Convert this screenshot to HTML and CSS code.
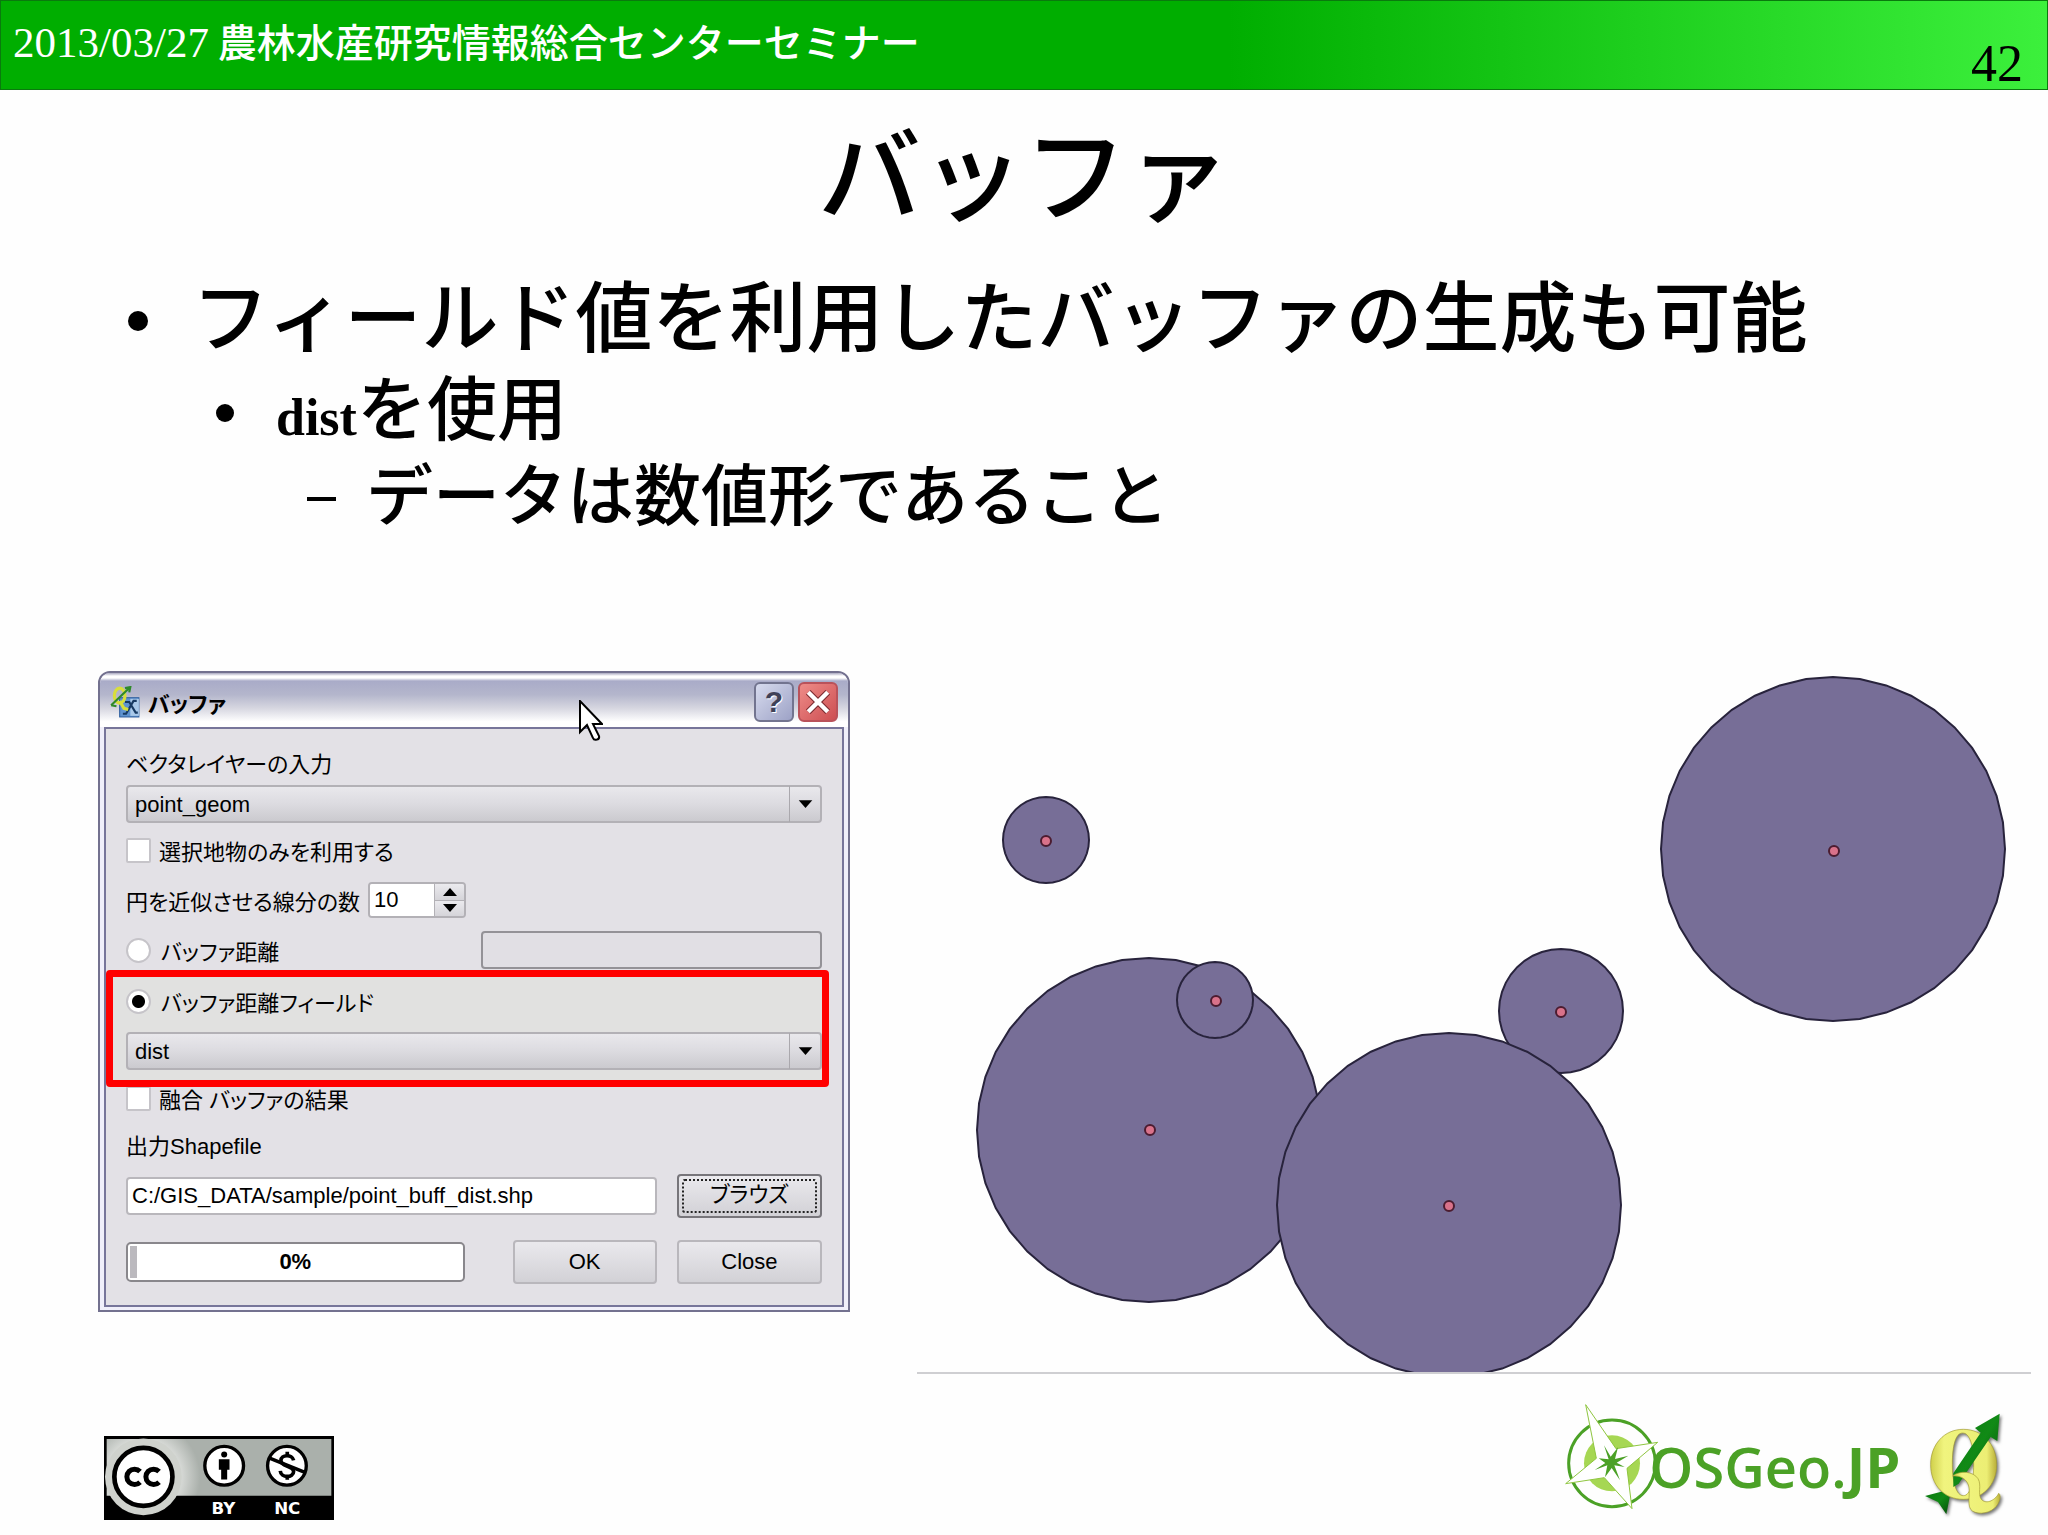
FILE: index.html
```html
<!DOCTYPE html>
<html lang="ja">
<head>
    <meta charset="UTF-8">
    <meta name="viewport" content="width=device-width, initial-scale=1.0">
    <title>バッファ</title>
    <link rel="stylesheet" href="styles.css">
</head>
<body>
    <header class="topbar">
        <p class="event"><span class="date">2013/03/27</span> 農林水産研究情報総合センターセミナー</p>
        <span class="page-number">42</span>
    </header>

    <main>
        <h1>バッファ</h1>
        <ul class="points">
            <li class="point level1">フィールド値を利用したバッファの生成も可能</li>
            <li class="point level2"><span><b class="field-name">dist</b>を使用</span></li>
            <li class="point level3">データは数値形であること</li>
        </ul>

        <div class="figures">
            <!-- Buffer dialog -->
            <section class="dialog">
                <div class="titlebar">
                    <svg class="app-icon" viewBox="0 0 28 30" aria-hidden="true">
                        <rect x="9" y="11" width="18" height="18" fill="#5f93cf" stroke="#2f5f9f"/>
                        <rect x="19" y="12" width="8" height="16" fill="#a9c9ea"/>
                        <path d="M14 15h4l6 10h2M25 14h-3l-7 12h-3" stroke="#173a63" stroke-width="2" fill="none"/>
                        <ellipse cx="9" cy="9" rx="5" ry="7" fill="none" stroke="#d8de3c" stroke-width="3"/>
                        <path d="M9 14l4 7 4 1" stroke="#d8de3c" stroke-width="3" fill="none"/>
                        <path d="M1 18L19 1M14 2l5-1-1 5M1 18l5 1" stroke="#2f8a2a" stroke-width="2" fill="none"/>
                    </svg>
                    <h2>バッファ</h2>
                    <button type="button" class="title-btn help" aria-label="ヘルプ">?</button>
                    <button type="button" class="title-btn close" aria-label="閉じる">
                        <svg viewBox="0 0 24 24"><path d="M3 3l18 18M21 3L3 21" stroke="#7a2a30" stroke-width="6"/><path d="M3 3l18 18M21 3L3 21" stroke="#fff" stroke-width="4"/></svg>
                    </button>
                </div>
                <form class="client">
                    <label class="row" for="layer">ベクタレイヤーの入力</label>
                    <div class="combo tight">
                        <select id="layer"><option>point_geom</option></select>
                        <svg class="combo-arrow" viewBox="0 0 32 36"><path d="M9 14h14l-7 8z"/></svg>
                    </div>
                    <label class="row near"><input type="checkbox"> 選択地物のみを利用する</label>
                    <div class="row apart">
                        <label for="segments">円を近似させる線分の数</label>
                        <div class="spin">
                            <input type="number" id="segments" value="10">
                            <div class="spin-buttons">
                                <button type="button" aria-label="増やす"><svg viewBox="0 0 14 8"><path d="M0 8L7 0l7 8z"/></svg></button>
                                <button type="button" aria-label="減らす"><svg viewBox="0 0 14 8"><path d="M0 0l7 8 7-8z"/></svg></button>
                            </div>
                        </div>
                    </div>
                    <div class="row split apart">
                        <label class="choice"><input type="radio" name="mode"> バッファ距離</label>
                        <input type="text" class="distance" aria-label="バッファ距離" disabled>
                    </div>
                    <div class="highlight">
                        <label class="row choice"><input type="radio" name="mode" checked> バッファ距離フィールド</label>
                        <div class="combo apart">
                            <select aria-label="バッファ距離フィールド"><option>dist</option></select>
                            <svg class="combo-arrow" viewBox="0 0 32 36"><path d="M9 14h14l-7 8z"/></svg>
                        </div>
                    </div>
                    <label class="row merge"><input type="checkbox"> 融合 バッファの結果</label>
                    <label class="row near" for="output">出力Shapefile</label>
                    <div class="actions">
                        <input type="text" id="output" class="output" value="C:/GIS_DATA/sample/point_buff_dist.shp">
                        <button type="button" class="btn focused"><span>ブラウズ</span></button>
                        <div class="progress" role="progressbar" aria-valuenow="0">0%</div>
                        <button type="submit" class="btn">OK</button>
                        <button type="button" class="btn">Close</button>
                    </div>
                </form>
                <svg class="cursor" viewBox="0 0 24 42" aria-hidden="true">
                    <path d="M1 1v31l7-7 6 13c1 3 7 2 6-2l-6-12h9z" fill="#fff" stroke="#000" stroke-width="2"/>
                </svg>
            </section>

            <!-- Map canvas, every buffer is a 40-sided polygon -->
            <svg class="map" viewBox="0 0 1114 703" role="img" aria-label="バッファの結果">
                <defs>
                    <polygon id="buffer" vector-effect="non-scaling-stroke" points="100,0 98.8,15.6 95.1,30.9 89.1,45.4 80.9,58.8 70.7,70.7 58.8,80.9 45.4,89.1 30.9,95.1 15.6,98.8 0,100 -15.6,98.8 -30.9,95.1 -45.4,89.1 -58.8,80.9 -70.7,70.7 -80.9,58.8 -89.1,45.4 -95.1,30.9 -98.8,15.6 -100,0 -98.8,-15.6 -95.1,-30.9 -89.1,-45.4 -80.9,-58.8 -70.7,-70.7 -58.8,-80.9 -45.4,-89.1 -30.9,-95.1 -15.6,-98.8 0,-100 15.6,-98.8 30.9,-95.1 45.4,-89.1 58.8,-80.9 70.7,-70.7 80.9,-58.8 89.1,-45.4 95.1,-30.9 98.8,-15.6"/>
                </defs>
                <g class="buffers">
                    <use href="#buffer" transform="translate(129 169) scale(.43)"/>
                    <use href="#buffer" transform="translate(916 178) scale(1.72)"/>
                    <use href="#buffer" transform="translate(232 459) scale(1.72)"/>
                    <use href="#buffer" transform="translate(298 329) scale(.38)"/>
                    <use href="#buffer" transform="translate(644 340) scale(.62)"/>
                    <use href="#buffer" transform="translate(532 534) scale(1.72)"/>
                </g>
                <g class="sites">
                    <circle cx="129" cy="170" r="5"/>
                    <circle cx="917" cy="180" r="5"/>
                    <circle cx="233" cy="459" r="5"/>
                    <circle cx="299" cy="330" r="5"/>
                    <circle cx="644" cy="341" r="5"/>
                    <circle cx="532" cy="535" r="5"/>
                </g>
                <path class="map-edge" d="M0 702h1114"/>
            </svg>
        </div>
    </main>

    <footer>
        <svg class="cc" viewBox="42 33 689 251" role="img" aria-label="CC BY NC">
            <defs>
                <clipPath id="badge"><path d="M42 33h689v251H42z"/></clipPath>
                <radialGradient id="glow" gradientUnits="userSpaceOnUse" cx="160" cy="155" r="170">
                    <stop offset=".6" stop-color="#dfe1de"/><stop offset="1" stop-color="#aab0ab"/>
                </radialGradient>
            </defs>
            <path d="M42 33h689v251H42z"/>
            <path d="M50 42h673v170H50z" fill="url(#glow)"/>
            <circle cx="160" cy="155" r="115" fill="#cfd2cd" clip-path="url(#badge)"/>
            <circle cx="160" cy="155" r="87" fill="#fff" stroke="#000" stroke-width="14"/>
            <path d="M150 139a23 23 0 1 0 0 32M207 139a23 23 0 1 0 0 32" fill="none" stroke="#000" stroke-width="15"/>
            <circle cx="402" cy="122" r="58" fill="#fff" stroke="#000" stroke-width="10"/>
            <circle cx="402" cy="88" r="9"/>
            <path d="M386 102h32v32h-7v29h-18v-29h-7z"/>
            <circle cx="590" cy="122" r="58" fill="#fff" stroke="#000" stroke-width="10"/>
            <path d="M610 106c-4-20-38-18-38 0 0 20 38 14 38 33 0 20-38 20-40-2M591 80v12M591 150v14" fill="none" stroke="#000" stroke-width="11"/>
            <path d="M538 99l104 42" stroke="#000" stroke-width="11"/>
            <text x="400" y="267">BY</text>
            <text x="591" y="267">NC</text>
        </svg>

        <div class="logos">
            <svg class="osgeo" viewBox="30 15 1050 357" role="img" aria-label="OSGeo.JP">
                <circle cx="186" cy="202" r="130" fill="none" stroke="#4ba126" stroke-width="9"/>
                <circle cx="186" cy="202" r="84" fill="#a6d753"/>
                <path d="M107 26l91 132 125-19-92 78 15 121-83-93-116 18 92-76z" fill="#fff" stroke="#8fc640" stroke-width="3"/>
                <path d="M162 148l20 34 22-28-9 35 40-10-35 21 24 13-31-5 17 45-25-37-20 28 7-36-38 14 32-21-20-14 30 3z" fill="#4ba126"/>
                <text x="298" y="277">OSGeo.<tspan class="jp">JP</tspan></text>
            </svg>
            <svg class="qgis" viewBox="60 30 270 342" role="img" aria-label="QGIS">
                <defs>
                    <linearGradient id="gold" x1="0" x2="1"><stop offset="0" stop-color="#d0d04c"/><stop offset=".2" stop-color="#f0f47e"/><stop offset=".85" stop-color="#ecee74"/><stop offset="1" stop-color="#b9ae38"/></linearGradient>
                    <linearGradient id="leaf" x1="0" x2="1" y2="1"><stop offset="0" stop-color="#0b7a10"/><stop offset=".5" stop-color="#118a16"/><stop offset="1" stop-color="#044d08"/></linearGradient>
                </defs>
                <g class="shaded">
                    <path d="M75 300l54-14 20 18-10 51-25-37z" fill="url(#leaf)"/>
                    <path d="M190 100c-58 0-98 46-98 106s40 104 98 104 100-44 100-104-42-106-100-106zm-2 11c22 0 33 40 33 94s-10 94-31 94-33-40-33-94 9-94 31-94z" fill="url(#gold)" stroke="#a39c35" stroke-width="2" fill-rule="evenodd"/>
                    <path d="M160 232l82-122-17-14 74-43-7 82-20-12-96 140-16 10z" fill="url(#leaf)"/>
                    <path d="M158 240c22-18 62-14 76 8 12 20-2 46 10 62 16 18 44 0 52-18 10 6 2 32-12 44-22 20-60 20-72 4-12-18 2-54-8-76-8-18-26-26-46-24z" fill="url(#gold)" stroke="#a39c35" stroke-width="2"/>
                </g>
            </svg>
        </div>
    </footer>
</body>
</html>
```
FILE: styles.css
```css
* {
    box-sizing: border-box;
}
body {
    margin: 0;
    min-height: 100vh;
    display: flex;
    flex-direction: column;
    background-color: #fefefe;
    color: #000;
    font-family: "Noto Sans CJK JP", sans-serif;
}
h1, h2, p, ul {
    margin: 0;
    padding: 0;
    font-weight: normal;
}
/* Header */
.topbar {
    height: 90px;
    display: flex;
    justify-content: space-between;
    padding: 0 24px 0 12px;
    border: 1px solid #0a7a0e;
    background: linear-gradient(to right, #00ae00 60%, #3cf03c);
}
.event {
    color: #fff;
    font-size: 39px;
    font-weight: 500;
    line-height: 78px;
    white-space: nowrap;
}
.date {
    font-family: "Liberation Serif", serif;
    font-size: 43px;
}
.page-number {
    align-self: flex-end;
    font-family: "Liberation Serif", serif;
    font-size: 52px;
    line-height: 50px;
}
/* Slide text */
h1 {
    margin-top: 20px;
    font-size: 103px;
    font-weight: 500;
    line-height: 120px;
    text-align: center;
}
.points {
    margin: 37px 0 140px;
    list-style: none;
    font-weight: 500;
}
.point {
    display: flex;
    align-items: center;
}
.point::before {
    content: "";
    flex: none;
    margin-top: 16px;
    border-radius: 50%;
    background-color: #000;
}
.level1 {
    padding-left: 128px;
    gap: 44px;
    font-size: 77px;
    line-height: 92px;
}
.level1::before {
    width: 20px;
    height: 20px;
}
.level2 {
    padding-left: 216px;
    gap: 42px;
    font-size: 70px;
    line-height: 92px;
}
.level2::before {
    width: 18px;
    height: 18px;
}
.level3 {
    padding-left: 307px;
    gap: 30px;
    font-size: 67px;
    line-height: 80px;
}
.level3::before {
    width: 29px;
    height: 4px;
    border-radius: 0;
}
.field-name {
    font-family: "Liberation Serif", serif;
    font-size: 52px;
    line-height: 1;
}
.figures {
    display: grid;
    grid-template-columns: 752fr 1114fr;
    gap: 67px;
    align-items: start;
    padding: 0 17px 0 98px;
}
/* Dialog */
.dialog {
    position: relative;
    border: 2px solid #73718f;
    border-radius: 12px 12px 0 0;
    background-color: #f0effa;
    font-family: "Liberation Sans", "Noto Sans CJK JP", sans-serif;
    font-size: 22px;
    font-feature-settings: "palt";
}
.titlebar {
    height: 54px;
    display: flex;
    align-items: center;
    gap: 4px;
    padding: 3px 10px 0;
    border-radius: 10px 10px 0 0;
    background: linear-gradient(#a9a8c0 0, #fff 3px, #fff 5px, #a9abc8 8px, #b4b6cc 40%, #d6d6e0 65%, #fff 90%);
}
.titlebar h2 {
    flex: 1;
    margin-left: 4px;
    font-size: 22px;
    font-weight: bold;
}
.app-icon {
    width: 30px;
    height: 32px;
}
.title-btn {
    width: 40px;
    height: 40px;
    padding: 0;
    border: 2px solid #72748f;
    border-radius: 6px;
    background: linear-gradient(135deg, #d7dbee, #9da2c6);
    color: #3f4057;
    font: bold 30px "Liberation Sans", sans-serif;
    text-shadow: 1px 1px 0 #fff;
}
.title-btn.close {
    border-color: #b9525a;
    background: linear-gradient(135deg, #ee8c88, #cd4e52);
}
.close svg {
    display: block;
    width: 26px;
    height: 26px;
    margin: auto;
}
.client {
    display: flex;
    flex-direction: column;
    margin: 0 4px 3px;
    padding: 14px 20px 21px;
    border: 2px solid #77759a;
    background-color: #e3e1e6;
}
.row {
    height: 38px;
    display: flex;
    align-items: center;
    gap: 8px;
}
.tight {
    margin-top: 4px;
}
.near {
    margin-top: 8px;
}
.apart {
    margin-top: 12px;
}
.split {
    justify-content: space-between;
}
.choice {
    display: flex;
    align-items: center;
    gap: 10px;
}
.client input, .client select, .client button {
    margin: 0;
    color: #000;
    font: inherit;
    font-feature-settings: inherit;
}
.client input[type="checkbox"], .client input[type="radio"] {
    appearance: none;
    width: 25px;
    height: 25px;
    border: 2px solid #c6c4c9;
    border-radius: 2px;
    background-color: #fff;
}
.client input[type="radio"] {
    border-radius: 50%;
}
.client input[type="radio"]:checked {
    background: radial-gradient(circle, #000 6px, #fff 7px);
}
.combo {
    position: relative;
    height: 38px;
}
.combo select {
    appearance: none;
    width: 100%;
    height: 100%;
    padding: 0 40px 0 7px;
    border: 2px solid #b3b1b6;
    border-radius: 4px;
    background: linear-gradient(#e9e8ec, #dcdbe0 50%, #cbcacf);
}
.combo-arrow {
    position: absolute;
    right: 1px;
    top: 1px;
    width: 32px;
    height: 36px;
    border-left: 1px solid #aaa8ad;
    pointer-events: none;
}
.spin {
    display: flex;
    width: 98px;
    height: 36px;
    border: 2px solid #b3b1b6;
    border-radius: 4px;
    overflow: hidden;
}
.spin input {
    appearance: textfield;
    width: 64px;
    padding: 0 4px;
    border: 0;
}
.spin-buttons {
    flex: 1;
    display: flex;
    flex-direction: column;
    border-left: 1px solid #b3b1b6;
}
.spin-buttons button {
    flex: 1;
    display: flex;
    align-items: center;
    justify-content: center;
    padding: 0;
    border: 0;
    background: linear-gradient(#ebeaee, #d5d4d9);
}
.spin-buttons button + button {
    border-top: 1px solid #b3b1b6;
}
.spin-buttons svg {
    width: 14px;
    height: 8px;
}
.client .distance {
    width: 49%;
    height: 38px;
    border: 2px solid #949297;
    border-radius: 4px;
    background-color: #e1dfe4;
}
/* Red frame runs over the edge of the rows around it */
.highlight {
    position: relative;
    z-index: 1;
    margin: 1px -7px -8px -20px;
    padding: 5px 0 10px 13px;
    border: 7px solid #ff0000;
    border-radius: 4px;
    background-color: #e1e1e0;
}
.actions {
    display: grid;
    grid-template-columns: 366fr 144fr 145fr;
    column-gap: 20px;
    row-gap: 22px;
    align-items: center;
    margin-top: 11px;
}
.client .output {
    grid-column: 1 / 3;
    width: 100%;
    height: 38px;
    padding: 0 4px;
    border: 2px solid #b9b7bc;
    border-radius: 4px;
}
.progress {
    height: 40px;
    margin-right: 28px;
    border: 2px solid #89878c;
    border-radius: 5px;
    background: linear-gradient(#bbb9be, #bbb9be) 2px 2px / 7px 32px no-repeat #fff;
    font-weight: bold;
    line-height: 36px;
    text-align: center;
}
.btn {
    height: 44px;
    padding: 3px;
    border: 2px solid #b9b7bc;
    border-radius: 4px;
    background: linear-gradient(#eae9ed, #d2d1d6);
}
.btn.focused {
    border-color: #77757a;
}
.focused span {
    display: block;
    height: 34px;
    border: 2px dotted #222;
    border-radius: 3px;
    line-height: 28px;
}
.cursor {
    position: absolute;
    left: 64%;
    top: 27px;
    width: 24px;
    height: 42px;
}
/* Map */
.map {
    display: block;
    width: 100%;
}
.buffers {
    fill: #776e97;
    stroke: #28233c;
    stroke-width: 2px;
}
.sites {
    fill: #d9728a;
    stroke: #4c1c30;
    stroke-width: 2px;
}
.map-edge {
    stroke: #cfcfd2;
    stroke-width: 2px;
}
/* Footer */
footer {
    flex: 1;
    display: flex;
    align-items: flex-end;
    justify-content: space-between;
    padding: 0 38px 15px 104px;
}
.cc {
    width: 230px;
    height: 84px;
}
.cc text {
    fill: #fff;
    font: bold 50px "DejaVu Sans", sans-serif;
    text-anchor: middle;
}
.logos {
    display: flex;
    align-items: flex-end;
    gap: 10px;
}
.osgeo {
    width: 350px;
    height: 119px;
}
.osgeo text {
    fill: #4ba126;
    font: 600 168px "Open Sans", sans-serif;
}
.osgeo .jp {
    font-weight: bold;
}
.qgis {
    width: 90px;
    height: 114px;
}
.shaded {
    filter: drop-shadow(5px 6px 5px #777);
}
```
